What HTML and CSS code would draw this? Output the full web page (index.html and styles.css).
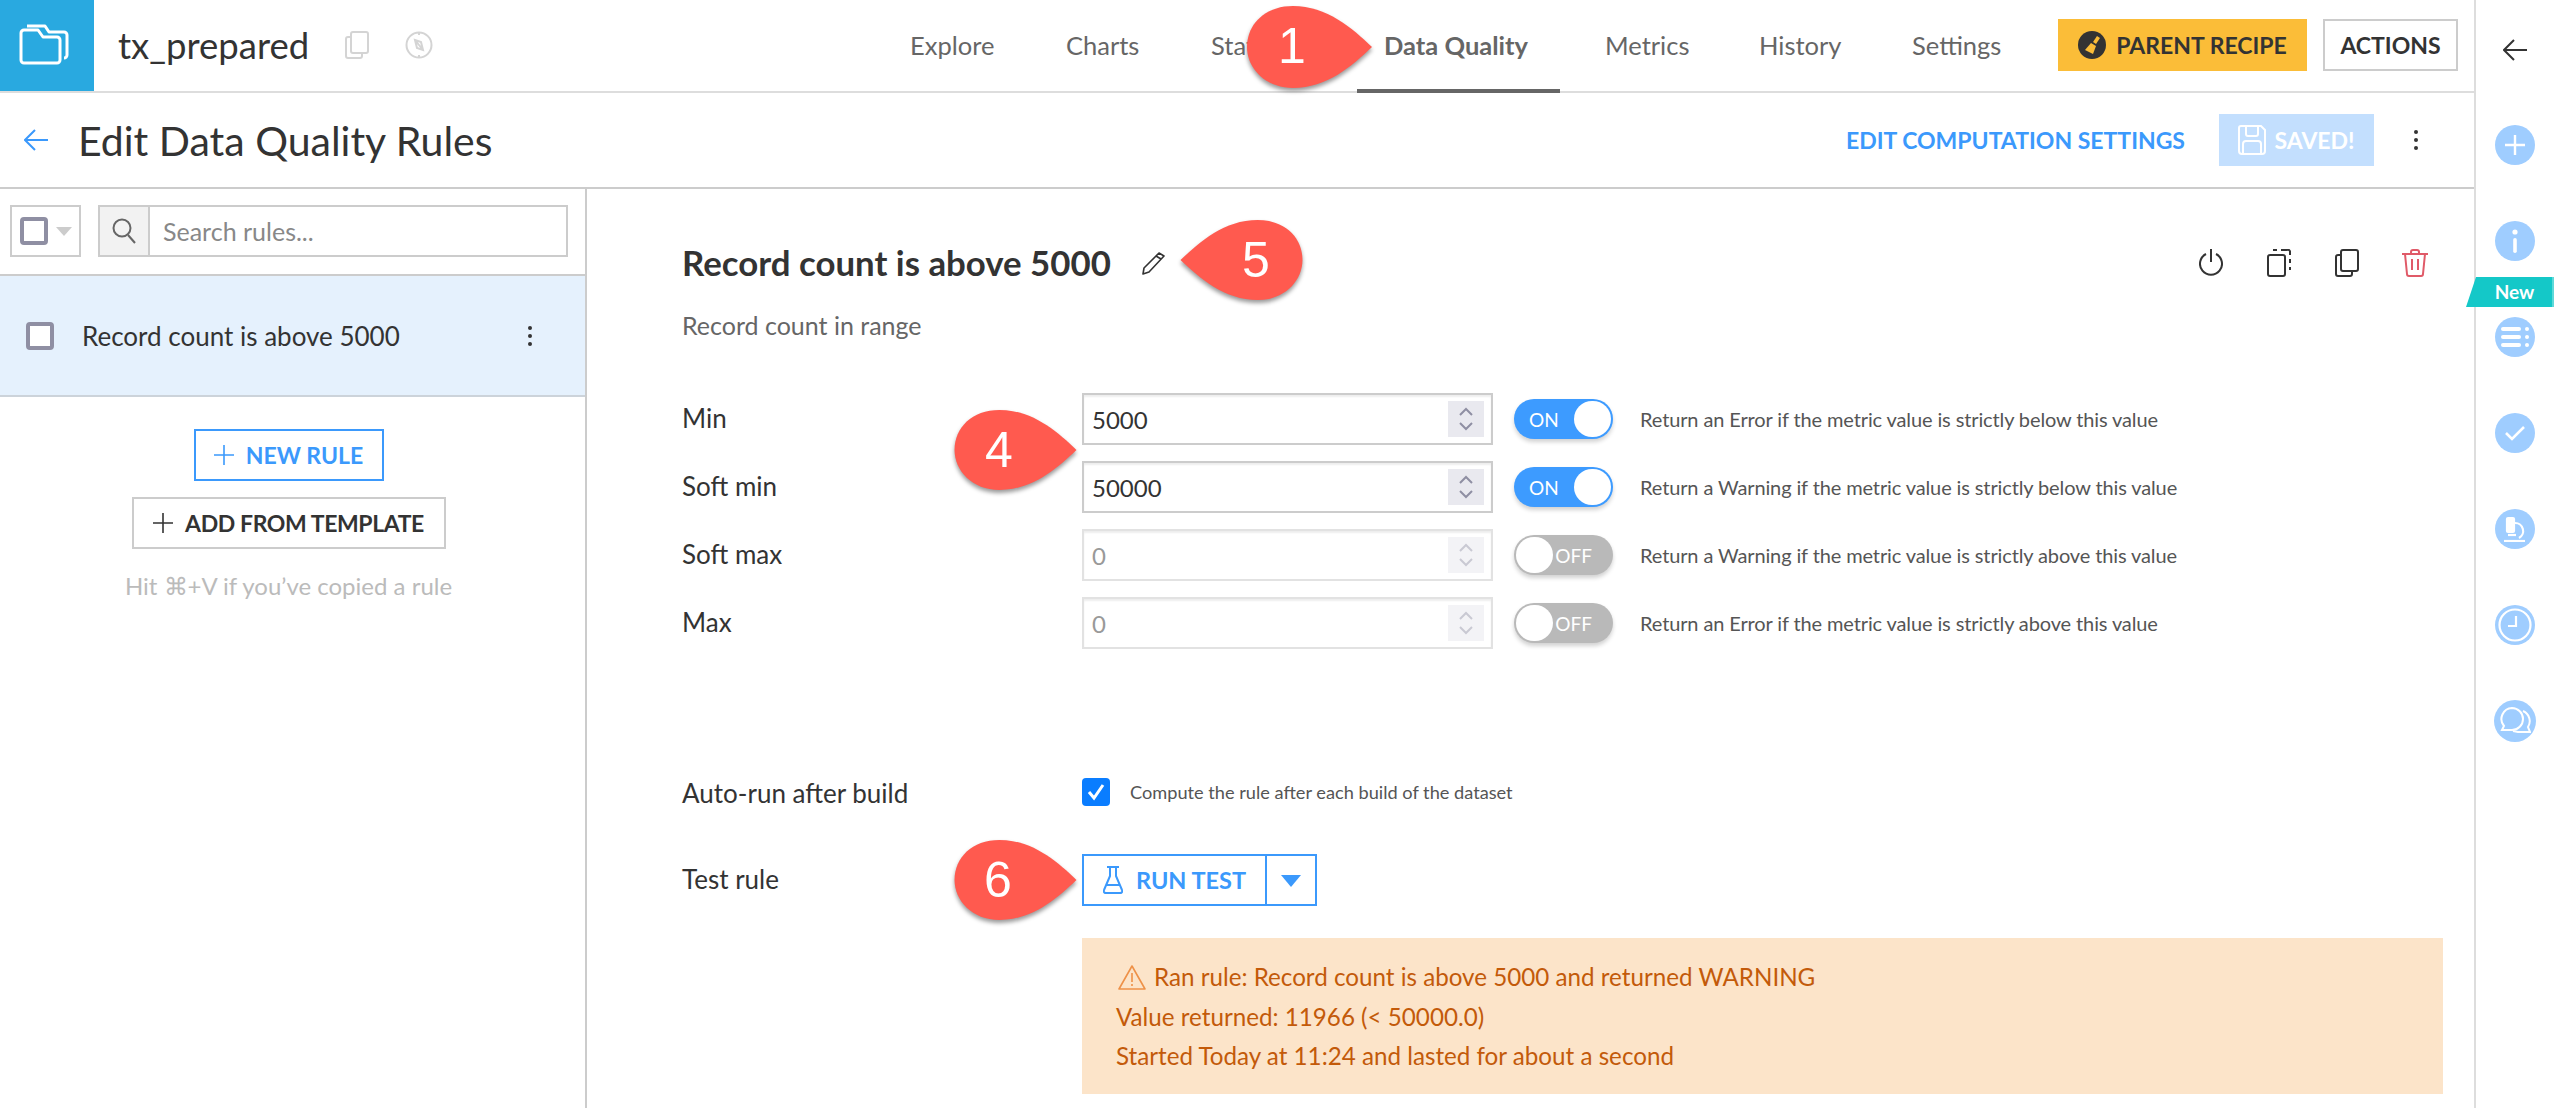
FILE: index.html
```html
<!DOCTYPE html>
<html lang="en">
<head>
<meta charset="utf-8">
<title>Edit Data Quality Rules</title>
<link rel="stylesheet" href="styles.css">
</head>
<body>
<div class="app">
  <div class="main">
    <header class="top">
      <div class="logo">
        <svg width="94" height="91" viewBox="0 0 94 91" fill="none" stroke="#fff" stroke-width="3" stroke-linejoin="round"><path d="M21 33a3 3 0 0 1 3-3h14l5 7h14a3 3 0 0 1 3 3v20a3 3 0 0 1-3 3H24a3 3 0 0 1-3-3z"/><path d="M27 26h18l4 6h15a3 3 0 0 1 3 3v20a3 3 0 0 1-3 3"/></svg>
      </div>
      <div class="dataset">tx_prepared</div>
      <svg class="ds-icon copy-ic" width="24" height="28" viewBox="0 0 24 28" fill="none" stroke="#d4d4d4" stroke-width="2"><rect x="6" y="1" width="17" height="21" rx="2"/><path d="M6 6H3a2 2 0 0 0-2 2v17a2 2 0 0 0 2 2h12a2 2 0 0 0 2-2v-3"/></svg>
      <svg class="ds-icon comp-ic" width="28" height="28" viewBox="0 0 28 28" fill="none" stroke="#d4d4d4" stroke-width="2"><circle cx="14" cy="14" r="12.5"/><path d="M10 9l8 10M10 9l6 2 2 8-6-2z"/><path d="M14 1v3M14 24v3"/></svg>
      <nav class="tabs">
        <a class="tab">Explore</a>
        <a class="tab">Charts</a>
        <a class="tab">Statistics</a>
        <a class="tab tab-active">Data Quality</a>
        <a class="tab">Metrics</a>
        <a class="tab">History</a>
        <a class="tab">Settings</a>
      </nav>
      <button class="btn btn-recipe">
        <svg width="28" height="28" viewBox="0 0 28 28"><circle cx="14" cy="14" r="14" fill="#333"/><path d="M19 5l3 2-4 6-3-2z" fill="#fbbd38"/><path d="M13 12l5 3-3 8-8-4z" fill="#fbbd38"/></svg>
        PARENT RECIPE
      </button>
      <button class="btn btn-actions">ACTIONS</button>
    </header>

    <div class="titlebar">
      <svg class="back" width="24" height="24" viewBox="0 0 24 24" fill="none" stroke="#3b99fc" stroke-width="2"><path d="M24 12H1M11 2L1 12l10 10"/></svg>
      <h1 class="page-title">Edit Data Quality Rules</h1>
      <a class="link-settings">EDIT COMPUTATION SETTINGS</a>
      <button class="btn btn-saved">
        <svg width="28" height="30" viewBox="0 0 28 30" fill="none" stroke="#fff" stroke-width="2"><path d="M3 1h20l4 4v21a3 3 0 0 1-3 3H4a3 3 0 0 1-3-3V3a2 2 0 0 1 2-2z"/><path d="M8 1v8a2 2 0 0 0 2 2h8a2 2 0 0 0 2-2V1M5 29V19a3 3 0 0 1 3-3h12a3 3 0 0 1 3 3v10"/></svg>
        SAVED!
      </button>
      <svg class="kebab kebab-title" width="6" height="22" viewBox="0 0 6 22" fill="#333"><circle cx="3" cy="3" r="2"/><circle cx="3" cy="11" r="2"/><circle cx="3" cy="19" r="2"/></svg>
    </div>

    <div class="body">
      <aside class="side">
        <div class="side-top">
          <div class="select-box">
            <span class="check check-a"></span>
            <span class="caret"></span>
          </div>
          <div class="search">
            <span class="search-addon">
              <svg width="24" height="26" viewBox="0 0 24 26" fill="none" stroke="#666" stroke-width="2"><circle cx="10" cy="10" r="8.5"/><path d="M16 17l7 8"/></svg>
            </span>
            <span class="search-text">Search rules...</span>
          </div>
        </div>
        <div class="rule-item">
          <span class="check check-b"></span>
          <span class="rule-name">Record count is above 5000</span>
          <svg class="kebab" width="6" height="22" viewBox="0 0 6 22" fill="#333"><circle cx="3" cy="3" r="2"/><circle cx="3" cy="11" r="2"/><circle cx="3" cy="19" r="2"/></svg>
        </div>
        <div class="side-actions">
          <button class="btn btn-new">
            <svg width="20" height="20" viewBox="0 0 20 20" stroke="#3b99fc" stroke-width="1.6"><path d="M10 0v20M0 10h20"/></svg>
            NEW RULE
          </button>
          <button class="btn btn-template">
            <svg width="20" height="20" viewBox="0 0 20 20" stroke="#333" stroke-width="1.6"><path d="M10 0v20M0 10h20"/></svg>
            ADD FROM TEMPLATE
          </button>
          <div class="hint">Hit ⌘+V if you’ve copied a rule</div>
        </div>
      </aside>

      <section class="panel">
        <div class="panel-head">
          <h2 class="rule-title">Record count is above 5000</h2>
          <svg class="pencil" width="25" height="24" viewBox="0 0 25 24" fill="none" stroke="#333" stroke-width="1.6" stroke-linejoin="round"><path d="M18 2l5 3L8 21l-6 2 1-6z"/><path d="M15 5l5 3"/></svg>
          <div class="panel-tools">
            <svg width="24" height="28" viewBox="0 0 24 28" fill="none" stroke="#333" stroke-width="2"><path d="M12 0v13"/><path d="M7 5a11 11 0 1 0 10 0"/></svg>
            <svg width="24" height="28" viewBox="0 0 24 28" fill="none" stroke="#333" stroke-width="2"><rect x="1" y="6" width="17" height="21" rx="2"/><path d="M7 2V1h3M14 1h6a2 2 0 0 1 3 2v3M23 10v4M23 18v3"/></svg>
            <svg width="24" height="28" viewBox="0 0 24 28" fill="none" stroke="#333" stroke-width="2"><rect x="6" y="1" width="17" height="21" rx="2"/><path d="M6 6H3a2 2 0 0 0-2 2v17a2 2 0 0 0 2 2h12a2 2 0 0 0 2-2v-3"/></svg>
            <svg class="tool-trash" width="26" height="28" viewBox="0 0 26 28" fill="none" stroke="#e05a68" stroke-width="2"><path d="M0 5h26M9 5V3a2 2 0 0 1 2-2h4a2 2 0 0 1 2 2v2M3 5l2 20a2 2 0 0 0 2 2h12a2 2 0 0 0 2-2l2-20M10 10v11M16 10v11"/></svg>
          </div>
        </div>
        <p class="rule-sub">Record count in range</p>

        <div class="rows">
          <div class="row">
            <label class="row-label">Min</label>
            <div class="num"><span>5000</span><span class="spin"><svg width="14" height="26" viewBox="0 0 14 26" fill="none" stroke="#8f8fa3" stroke-width="2"><path d="M1 9l6-6 6 6M1 17l6 6 6-6"/></svg></span></div>
            <div class="toggle toggle-on"><span class="toggle-text">ON</span><span class="knob"></span></div>
            <span class="row-help">Return an Error if the metric value is strictly below this value</span>
          </div>
          <div class="row">
            <label class="row-label">Soft min</label>
            <div class="num"><span>50000</span><span class="spin"><svg width="14" height="26" viewBox="0 0 14 26" fill="none" stroke="#8f8fa3" stroke-width="2"><path d="M1 9l6-6 6 6M1 17l6 6 6-6"/></svg></span></div>
            <div class="toggle toggle-on"><span class="toggle-text">ON</span><span class="knob"></span></div>
            <span class="row-help">Return a Warning if the metric value is strictly below this value</span>
          </div>
          <div class="row">
            <label class="row-label">Soft max</label>
            <div class="num num-off"><span>0</span><span class="spin"><svg width="14" height="26" viewBox="0 0 14 26" fill="none" stroke="#c9c9d3" stroke-width="2"><path d="M1 9l6-6 6 6M1 17l6 6 6-6"/></svg></span></div>
            <div class="toggle toggle-off"><span class="knob"></span><span class="toggle-text">OFF</span></div>
            <span class="row-help">Return a Warning if the metric value is strictly above this value</span>
          </div>
          <div class="row">
            <label class="row-label">Max</label>
            <div class="num num-off"><span>0</span><span class="spin"><svg width="14" height="26" viewBox="0 0 14 26" fill="none" stroke="#c9c9d3" stroke-width="2"><path d="M1 9l6-6 6 6M1 17l6 6 6-6"/></svg></span></div>
            <div class="toggle toggle-off"><span class="knob"></span><span class="toggle-text">OFF</span></div>
            <span class="row-help">Return an Error if the metric value is strictly above this value</span>
          </div>
        </div>

        <div class="row-auto">
          <label class="row-label">Auto-run after build</label>
          <span class="check-on"><svg width="18" height="18" viewBox="0 0 18 18" fill="none" stroke="#fff" stroke-width="3"><path d="M2 9l5 6 9-13"/></svg></span>
          <span class="auto-help">Compute the rule after each build of the dataset</span>
        </div>

        <div class="row-test">
          <label class="row-label">Test rule</label>
          <div class="run-group">
            <button class="run-main">
              <svg width="20" height="28" viewBox="0 0 20 28" fill="none" stroke="#3b99fc" stroke-width="2" stroke-linejoin="round"><path d="M4 1h12M7 1v9L1 24a2 2 0 0 0 2 3h14a2 2 0 0 0 2-3l-6-14V1M4 19h12"/></svg>
              RUN TEST
            </button>
            <span class="run-caret"></span>
          </div>
        </div>

        <div class="alert">
          <div class="alert-first">
            <svg width="28" height="26" viewBox="0 0 28 26" fill="none" stroke="#ee9148" stroke-width="1.6" stroke-linejoin="round"><path d="M14 2L1 25h26z"/><path d="M14 9v9M14 20v2"/></svg>
            <span>Ran rule: Record count is above 5000 and returned WARNING</span>
          </div>
          <div>Value returned: 11966 (&lt; 50000.0)</div>
          <div>Started Today at 11:24 and lasted for about a second</div>
        </div>
      </section>
    </div>
  </div>

  <aside class="rail">
    <svg class="rail-back" width="24" height="22" viewBox="0 0 24 22" fill="none" stroke="#333" stroke-width="2"><path d="M24 11H1M11 1L1 11l10 10"/></svg>
    <span class="circle"><svg width="22" height="22" viewBox="0 0 22 22" stroke="#fff" stroke-width="2.4"><path d="M11 1v20M1 11h20"/></svg></span>
    <span class="circle"><svg width="6" height="24" viewBox="0 0 6 24" fill="#fff"><circle cx="3" cy="3" r="2.6"/><rect x="1.2" y="9" width="3.6" height="15" rx="1.8"/></svg></span>
    <span class="circle"><svg width="28" height="22" viewBox="0 0 28 22" fill="#fff"><rect x="0" y="1" width="20" height="4" rx="2"/><rect x="0" y="9" width="20" height="4" rx="2"/><rect x="0" y="17" width="20" height="4" rx="2"/><circle cx="26" cy="3" r="2"/><circle cx="26" cy="11" r="2"/><circle cx="26" cy="19" r="2"/></svg></span>
    <span class="circle"><svg width="20" height="16" viewBox="0 0 20 16" fill="none" stroke="#fff" stroke-width="2.6"><path d="M1 8l6 6L19 2"/></svg></span>
    <span class="circle"><svg width="22" height="26" viewBox="0 0 22 26" fill="none" stroke="#fff" stroke-width="2.2"><path d="M0 25h21"/><rect x="3" y="2" width="7" height="14" rx="1" fill="#fff"/><path d="M11 7a8 8 0 0 1 4 15"/><path d="M4 19h8"/></svg></span>
    <span class="circle"><svg width="34" height="34" viewBox="0 0 34 34" fill="none" stroke="#fff" stroke-width="2.2"><circle cx="17" cy="17" r="15.5"/><path d="M18 8v10h-8"/></svg></span>
    <span class="circle circle-lg"><svg width="32" height="28" viewBox="0 0 32 28" fill="none" stroke="#fff" stroke-width="2"><path d="M13 1a11 11 0 0 1 0 22H3l2-4a11 11 0 0 1 8-18z"/><path d="M24 4a11 11 0 0 1 5 16l2 5H19l-5-1"/></svg></span>
    <div class="new-tag">New</div>
  </aside>

  <div class="pin pin-1">
    <svg width="125" height="82" viewBox="0 0 125 82"><path class="pin-shape" d="M125 41C105 60 80 82 46 82 18 82 0 62 0 41 0 18 18 0 46 0c34 0 59 22 79 41z"/></svg>
    <span class="pin-num">1</span>
  </div>
  <div class="pin pin-4">
    <svg width="123" height="80" viewBox="0 0 125 82"><path class="pin-shape" d="M125 41C105 60 80 82 46 82 18 82 0 62 0 41 0 18 18 0 46 0c34 0 59 22 79 41z"/></svg>
    <span class="pin-num">4</span>
  </div>
  <div class="pin pin-5">
    <svg width="125" height="80" viewBox="0 0 125 82"><path class="pin-shape" d="M0 41C20 60 45 82 79 82 107 82 125 62 125 41 125 18 107 0 79 0 45 0 20 22 0 41z"/></svg>
    <span class="pin-num">5</span>
  </div>
  <div class="pin pin-6">
    <svg width="125" height="80" viewBox="0 0 125 82"><path class="pin-shape" d="M125 41C105 60 80 82 46 82 18 82 0 62 0 41 0 18 18 0 46 0c34 0 59 22 79 41z"/></svg>
    <span class="pin-num">6</span>
  </div>
</div>
</body>
</html>
```

FILE: styles.css
```css
* { box-sizing: border-box; }
html, body { margin: 0; padding: 0; }
body {
  width: 2554px;
  height: 1108px;
  overflow: hidden;
  background: #fff;
  color: #333;
  font-family: Lato, "Noto Sans", sans-serif;
  font-size: 25px;
}
button { font-family: inherit; cursor: pointer; background: none; }
h1, h2, p { margin: 0; font-weight: 400; }

.app { position: relative; display: flex; width: 2554px; height: 1108px; }
.main { width: 2474px; display: flex; flex-direction: column; }

/* top bar */
.top { height: 93px; display: flex; align-items: flex-start; border-bottom: 2px solid #ddd; }
.logo { width: 94px; height: 91px; background: #29a9e0; flex: none; }
.logo svg { display: block; }
.dataset { margin-left: 24px; width: 227px; line-height: 91px; font-size: 36.5px; color: #333; }
.ds-icon { margin-top: 31px; flex: none; }
.comp-ic { margin-left: 36px; }
.tabs {
  margin-left: 477px;
  display: grid;
  grid-template-columns: 156px 145px 173px 221px 154px 153px 146px;
  width: 1148px;
  height: 91px;
}
.tab { position: relative; font-size: 25.5px; line-height: 90px; color: #666; white-space: nowrap; }
.tab-active { font-weight: 700; }
.tab-active::after {
  content: "";
  position: absolute;
  left: -27px;
  width: 203px;
  top: 89px;
  height: 4px;
  background: #666;
}
.btn {
  height: 52px;
  display: inline-flex;
  align-items: center;
  justify-content: center;
  border: 0;
  padding: 0;
  font-size: 23px;
  font-weight: 700;
  white-space: nowrap;
}
.btn-recipe { margin-top: 19px; width: 249px; background: #fbbd38; color: #333; gap: 10px; flex: none; }
.btn-actions { margin: 19px 0 0 16px; width: 135px; border: 2px solid #ccc; color: #333; flex: none; }

/* title bar */
.titlebar { height: 96px; display: flex; align-items: center; border-bottom: 2px solid #ccc; padding: 0 55px 0 24px; }
.back { flex: none; }
.page-title { margin-left: 30px; font-size: 41px; color: #333; }
.link-settings { margin-left: auto; font-size: 23px; font-weight: 700; color: #3b99fc; white-space: nowrap; }
.btn-saved { margin-left: 34px; width: 155px; background: #c3dffe; color: #fff; gap: 8px; }
.kebab { flex: none; display: block; }
.kebab-title { margin-left: 39px; }

/* layout */
.body { flex: 1; display: flex; min-height: 0; }
.side { width: 587px; border-right: 2px solid #ccc; flex: none; display: flex; flex-direction: column; }
.side-top { height: 87px; padding: 16px 0 0 10px; display: flex; gap: 17px; border-bottom: 2px solid #ccc; }
.select-box { width: 71px; height: 52px; border: 2px solid #ccc; display: flex; align-items: center; padding-left: 8px; gap: 8px; }
.check { display: block; width: 28px; height: 28px; border: 4px solid #8f8fa3; border-radius: 4px; background: #fff; flex: none; }
.caret { width: 0; height: 0; border: 8px solid transparent; border-top: 9px solid #ccc; border-bottom: 0; }
.search { width: 470px; height: 52px; border: 2px solid #ccc; display: flex; align-items: stretch; }
.search-addon { width: 50px; background: #f2f2f2; border-right: 2px solid #ccc; display: flex; align-items: center; justify-content: center; flex: none; }
.search-text { padding-left: 13px; line-height: 48px; font-size: 25px; color: #888; }
.rule-item { height: 121px; background: #e5f1fd; border-bottom: 2px solid #ccd3da; display: flex; align-items: center; padding: 0 52px 0 26px; }
.rule-name { margin-left: 28px; font-size: 26px; color: #333; flex: 1; }
.side-actions { display: flex; flex-direction: column; align-items: center; padding-top: 32px; padding-right: 8px; }
.btn-new { width: 190px; border: 2px solid #3b99fc; color: #3b99fc; gap: 12px; }
.btn-template { margin-top: 16px; width: 314px; border: 2px solid #ccc; color: #333; gap: 12px; letter-spacing: -.4px; }
.hint { margin-top: 20px; font-size: 24px; line-height: 34px; color: #bbb; white-space: nowrap; }

/* panel */
.panel { flex: 1; padding: 51px 0 0 95px; display: flex; flex-direction: column; align-items: flex-start; }
.panel-head { width: 1746px; height: 46px; display: flex; align-items: center; }
.rule-title { font-size: 34.8px; font-weight: 700; line-height: 46px; color: #333; white-space: nowrap; }
.pencil { margin-left: 30px; flex: none; }
.panel-tools { margin-left: auto; display: flex; gap: 44px; align-items: center; }
.tool-trash { margin-left: -1px; }
.rule-sub { margin-top: 24px; height: 30px; line-height: 30px; font-size: 25px; color: #666; }
.rows { margin-top: 53px; display: flex; flex-direction: column; gap: 16px; }
.row { display: flex; align-items: center; height: 52px; }
.row-label { width: 400px; flex: none; font-size: 26px; color: #333; margin-top: -2px; white-space: nowrap; }
.num {
  width: 411px; height: 52px; flex: none;
  border: 2px solid #ccc;
  box-shadow: inset 0 2px 2px rgba(0,0,0,.07);
  display: flex; align-items: center; justify-content: space-between;
  padding: 0 7px 0 8px;
  font-size: 24px; color: #333;
}
.num-off { border-color: #e2e2e2; color: #999; }
.spin { width: 36px; height: 36px; background: #e9e9ef; display: flex; align-items: center; justify-content: center; }
.num-off .spin { background: #f3f3f6; }
.toggle {
  margin-left: 21px; width: 99px; height: 40px; flex: none;
  border-radius: 20px; display: flex; align-items: center; justify-content: space-between;
  padding: 2px; color: #fff; font-size: 19px; font-weight: 400;
  box-shadow: 0 3px 4px rgba(0,0,0,.18);
}
.toggle-on { background: #3d9bff; padding-left: 15px; }
.toggle-off { background: #b9b9b9; padding-right: 21px; }
.knob { width: 37px; height: 36px; background: #fff; border-radius: 18px; flex: none; }
.row-help { margin-left: 27px; font-size: 20px; letter-spacing: -.12px; color: #555; white-space: nowrap; }

.row-auto { margin-top: 129px; height: 28px; display: flex; align-items: center; }
.row-auto .row-label { margin-top: 2px; }
.check-on { width: 28px; height: 28px; border-radius: 4px; background: #0a7dff; display: flex; align-items: center; justify-content: center; flex: none; }
.auto-help { margin-left: 20px; font-size: 18.2px; color: #555; white-space: nowrap; }
.row-test { margin-top: 48px; height: 52px; display: flex; align-items: center; }
.run-group { width: 235px; height: 52px; border: 2px solid #3b99fc; display: flex; flex: none; }
.run-main { width: 183px; border: 0; border-right: 2px solid #3b99fc; padding: 0; color: #3b99fc; font-size: 23.5px; font-weight: 700; display: flex; align-items: center; justify-content: center; gap: 13px; }
.run-caret { width: 0; height: 0; margin: 19px 0 0 14px; border: 10px solid transparent; border-top: 12px solid #3b99fc; border-bottom: 0; }
.alert {
  margin: 32px 0 0 400px; width: 1361px; height: 156px;
  background: #fce4c9; color: #c35a0a;
  padding: 19px 0 0 34px;
  font-size: 24.2px; line-height: 39.5px;
}
.alert-first { display: flex; align-items: center; gap: 8px; margin-left: 2px; }

/* right rail */
.rail { width: 80px; border-left: 2px solid #ddd; display: flex; flex-direction: column; align-items: center; position: relative; padding-top: 39px; }
.rail-back { display: block; flex: none; }
.circle { width: 40px; height: 40px; border-radius: 50%; background: #9fcdff; display: flex; align-items: center; justify-content: center; margin-top: 56px; flex: none; }
.rail-back + .circle { margin-top: 64px; }
.circle-lg { width: 42px; height: 42px; margin-top: 55px; }
.new-tag {
  position: absolute;
  left: -10px; top: 277px;
  width: 88px; height: 37px;
  color: #fff; font-size: 19px; font-weight: 700; line-height: 30px; text-align: center;
  padding-left: 11px;
  background:
    linear-gradient(#14c8c8, #14c8c8) 0 0 / 100% 30px no-repeat;
  clip-path: polygon(10px 0, 100% 0, 100% 30px, 58px 30px, 49px 37px, 40px 30px, 0 30px);
  border-right: 2px solid #5fd9d9;
}

/* annotation pins */
.pin { position: absolute; width: 125px; height: 82px; filter: drop-shadow(0 3px 2px rgba(0,0,0,.4)); }
.pin svg { display: block; }
.pin-shape { fill: #ff5a4f; }
.pin-num {
  position: absolute; top: 0; height: 80px;
  font-family: "Liberation Sans", Arial, sans-serif;
  font-size: 50px; line-height: 80px; color: #fff;
  width: 40px; text-align: center;
}
.pin-1 { left: 1247px; top: 6px; }
.pin-1 .pin-num { left: 25px; }
.pin-4 { left: 954px; top: 410px; }
.pin-4 .pin-num { left: 25px; }
.pin-5 { left: 1179px; top: 220px; }
.pin-5 .pin-num { left: 57px; }
.pin-6 { left: 953px; top: 840px; }
.pin-6 .pin-num { left: 25px; }
```
